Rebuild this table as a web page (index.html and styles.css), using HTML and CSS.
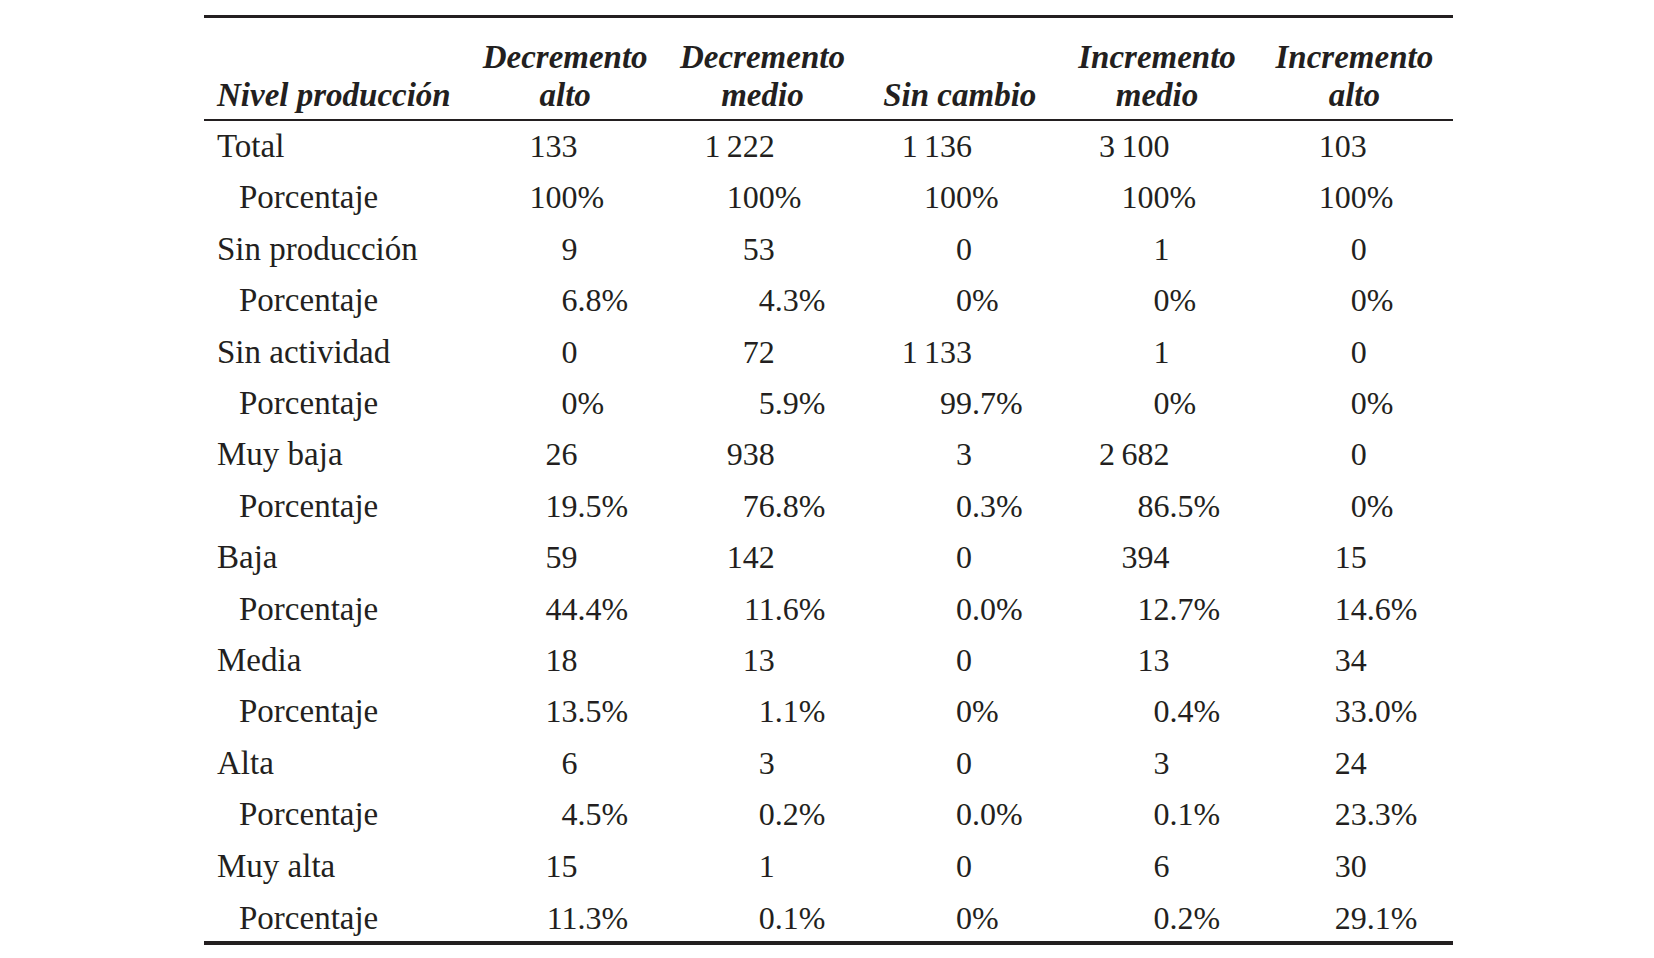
FILE: index.html
```html
<!DOCTYPE html>
<html lang="es">
<head>
<meta charset="utf-8">
<title>Nivel producción</title>
<link rel="stylesheet" href="styles.css">
</head>
<body>
<div class="page">
<table class="data">
<colgroup>
<col class="c-label">
<col class="c-num"><col class="c-num"><col class="c-num"><col class="c-num"><col class="c-num">
</colgroup>
<thead>
<tr>
<th class="h-label">Nivel producción</th>
<th>Decremento<br>alto</th>
<th>Decremento<br>medio</th>
<th>Sin cambio</th>
<th>Incremento<br>medio</th>
<th>Incremento<br>alto</th>
</tr>
</thead>
<tbody>
<tr><td class="lbl">Total</td><td><span class="i">133</span></td><td><span class="i">1&#8201;222</span></td><td><span class="i">1&#8201;136</span></td><td><span class="i">3&#8201;100</span></td><td><span class="i">103</span></td></tr>
<tr><td class="lbl sub">Porcentaje</td><td><span class="i">100</span>%</td><td><span class="i">100</span>%</td><td><span class="i">100</span>%</td><td><span class="i">100</span>%</td><td><span class="i">100</span>%</td></tr>
<tr><td class="lbl">Sin producción</td><td><span class="i">9</span></td><td><span class="i">53</span></td><td><span class="i">0</span></td><td><span class="i">1</span></td><td><span class="i">0</span></td></tr>
<tr><td class="lbl sub">Porcentaje</td><td><span class="i">6</span>.8%</td><td><span class="i">4</span>.3%</td><td><span class="i">0</span>%</td><td><span class="i">0</span>%</td><td><span class="i">0</span>%</td></tr>
<tr><td class="lbl">Sin actividad</td><td><span class="i">0</span></td><td><span class="i">72</span></td><td><span class="i">1&#8201;133</span></td><td><span class="i">1</span></td><td><span class="i">0</span></td></tr>
<tr><td class="lbl sub">Porcentaje</td><td><span class="i">0</span>%</td><td><span class="i">5</span>.9%</td><td><span class="i">99</span>.7%</td><td><span class="i">0</span>%</td><td><span class="i">0</span>%</td></tr>
<tr><td class="lbl">Muy baja</td><td><span class="i">26</span></td><td><span class="i">938</span></td><td><span class="i">3</span></td><td><span class="i">2&#8201;682</span></td><td><span class="i">0</span></td></tr>
<tr><td class="lbl sub">Porcentaje</td><td><span class="i">19</span>.5%</td><td><span class="i">76</span>.8%</td><td><span class="i">0</span>.3%</td><td><span class="i">86</span>.5%</td><td><span class="i">0</span>%</td></tr>
<tr><td class="lbl">Baja</td><td><span class="i">59</span></td><td><span class="i">142</span></td><td><span class="i">0</span></td><td><span class="i">394</span></td><td><span class="i">15</span></td></tr>
<tr><td class="lbl sub">Porcentaje</td><td><span class="i">44</span>.4%</td><td><span class="i">11</span>.6%</td><td><span class="i">0</span>.0%</td><td><span class="i">12</span>.7%</td><td><span class="i">14</span>.6%</td></tr>
<tr><td class="lbl">Media</td><td><span class="i">18</span></td><td><span class="i">13</span></td><td><span class="i">0</span></td><td><span class="i">13</span></td><td><span class="i">34</span></td></tr>
<tr><td class="lbl sub">Porcentaje</td><td><span class="i">13</span>.5%</td><td><span class="i">1</span>.1%</td><td><span class="i">0</span>%</td><td><span class="i">0</span>.4%</td><td><span class="i">33</span>.0%</td></tr>
<tr><td class="lbl">Alta</td><td><span class="i">6</span></td><td><span class="i">3</span></td><td><span class="i">0</span></td><td><span class="i">3</span></td><td><span class="i">24</span></td></tr>
<tr><td class="lbl sub">Porcentaje</td><td><span class="i">4</span>.5%</td><td><span class="i">0</span>.2%</td><td><span class="i">0</span>.0%</td><td><span class="i">0</span>.1%</td><td><span class="i">23</span>.3%</td></tr>
<tr><td class="lbl">Muy alta</td><td><span class="i">15</span></td><td><span class="i">1</span></td><td><span class="i">0</span></td><td><span class="i">6</span></td><td><span class="i">30</span></td></tr>
<tr class="last"><td class="lbl sub">Porcentaje</td><td><span class="i">11</span>.3%</td><td><span class="i">0</span>.1%</td><td><span class="i">0</span>%</td><td><span class="i">0</span>.2%</td><td><span class="i">29</span>.1%</td></tr>
</tbody>
</table>
</div>
</body>
</html>
```

FILE: styles.css
```css
html, body {
  margin: 0;
  padding: 0;
  background: #ffffff;
}

body {
  font-family: "Liberation Serif", "Times New Roman", serif;
  color: #231f20;
}

.page {
  padding: 15px 0 0 204px;
}

.data {
  border-collapse: collapse;
  table-layout: fixed;
  width: 1249px;
  font-size: 32px;
}

.c-label { width: 262.5px; }
.c-num { width: 197.3px; }

.data thead tr {
  border-top: 3px solid #231f20;
  border-bottom: 2px solid #231f20;
}

.data th {
  font-size: 33px;
  font-weight: bold;
  font-style: italic;
  line-height: 38px;
  padding: 20px 0 5px 0;
  vertical-align: bottom;
  text-align: center;
  white-space: nowrap;
}

.data th.h-label {
  text-align: left;
  padding-left: 13px;
}

.data tbody tr.last {
  border-bottom: 4px solid #231f20;
}

.data td {
  line-height: 51.4px;
  padding: 0 0 0 31px;
  white-space: nowrap;
  vertical-align: baseline;
}

.data tr.last td {
  line-height: 46px;
  padding-top: 3px;
}

.data td.lbl {
  font-size: 33px;
  padding-left: 13px;
}

.data td.lbl.sub {
  padding-left: 35px;
}

.i {
  display: inline-block;
  width: 80px;
  text-align: right;
}
```
